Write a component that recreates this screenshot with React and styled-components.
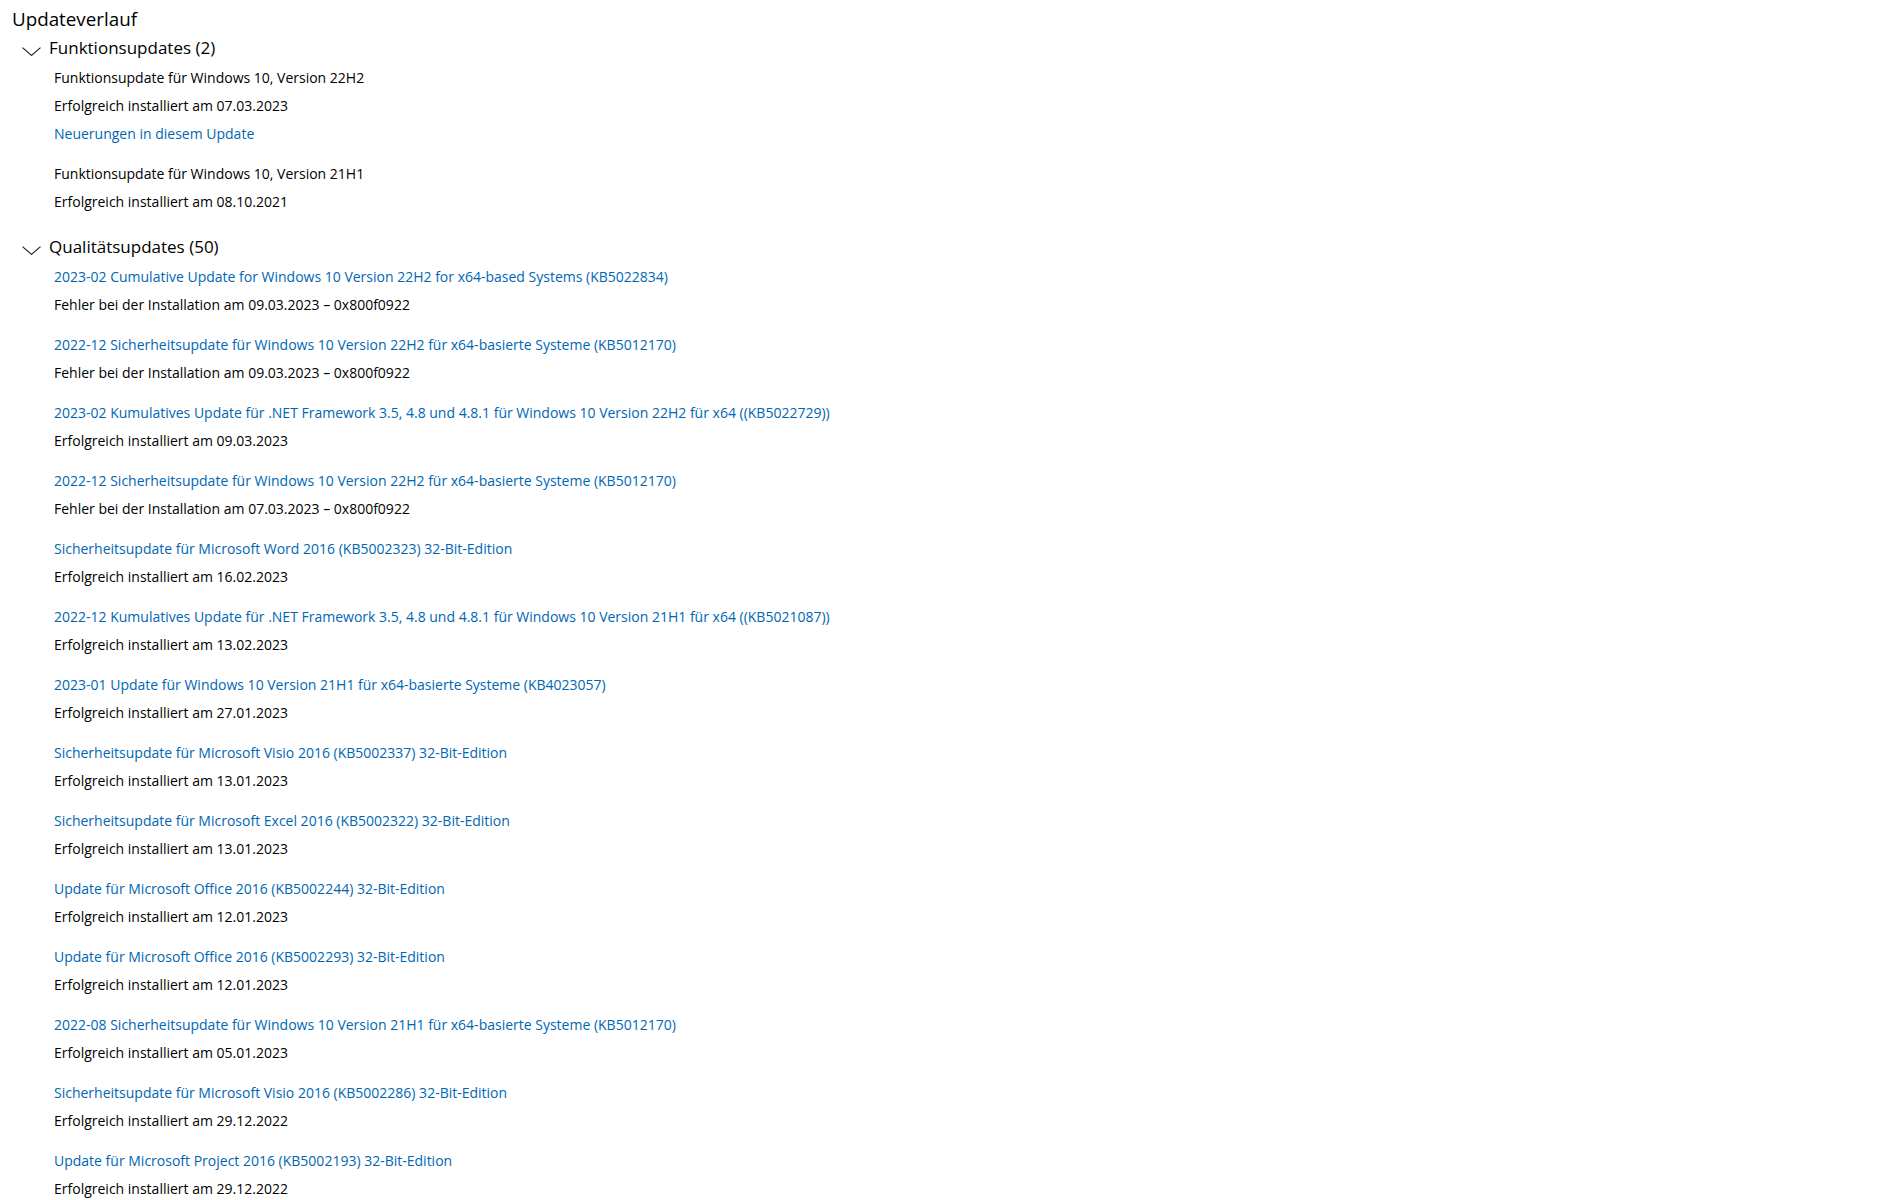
import { styled, createGlobalStyle } from 'styled-components'

const GlobalStyle = createGlobalStyle`
  html, body {
    margin: 0;
    padding: 0;
    background: #ffffff;
  }
  body {
    font-family: "Open Sans", "Noto Sans", "Liberation Sans", sans-serif;
    color: #000000;
  }
`;

const featureUpdates = [
  {
    name: 'Funktionsupdate für Windows 10, Version 22H2',
    status: 'Erfolgreich installiert am 07.03.2023',
    link: 'Neuerungen in diesem Update',
  },
  {
    name: 'Funktionsupdate für Windows 10, Version 21H1',
    status: 'Erfolgreich installiert am 08.10.2021',
  },
];

const failed = (date) => `Fehler bei der Installation am ${date} – 0x800f0922`
const ok = (date) => `Erfolgreich installiert am ${date}`

const qualityUpdates = [
  { name: '2023-02 Cumulative Update for Windows 10 Version 22H2 for x64-based Systems (KB5022834)', status: failed('09.03.2023') },
  { name: '2022-12 Sicherheitsupdate für Windows 10 Version 22H2 für x64-basierte Systeme (KB5012170)', status: failed('09.03.2023') },
  { name: '2023-02 Kumulatives Update für .NET Framework 3.5, 4.8 und 4.8.1 für Windows 10 Version 22H2 für x64 ((KB5022729))', status: ok('09.03.2023') },
  { name: '2022-12 Sicherheitsupdate für Windows 10 Version 22H2 für x64-basierte Systeme (KB5012170)', status: failed('07.03.2023') },
  { name: 'Sicherheitsupdate für Microsoft Word 2016 (KB5002323) 32-Bit-Edition', status: ok('16.02.2023') },
  { name: '2022-12 Kumulatives Update für .NET Framework 3.5, 4.8 und 4.8.1 für Windows 10 Version 21H1 für x64 ((KB5021087))', status: ok('13.02.2023') },
  { name: '2023-01 Update für Windows 10 Version 21H1 für x64-basierte Systeme (KB4023057)', status: ok('27.01.2023') },
  { name: 'Sicherheitsupdate für Microsoft Visio 2016 (KB5002337) 32-Bit-Edition', status: ok('13.01.2023') },
  { name: 'Sicherheitsupdate für Microsoft Excel 2016 (KB5002322) 32-Bit-Edition', status: ok('13.01.2023') },
  { name: 'Update für Microsoft Office 2016 (KB5002244) 32-Bit-Edition', status: ok('12.01.2023') },
  { name: 'Update für Microsoft Office 2016 (KB5002293) 32-Bit-Edition', status: ok('12.01.2023') },
  { name: '2022-08 Sicherheitsupdate für Windows 10 Version 21H1 für x64-basierte Systeme (KB5012170)', status: ok('05.01.2023') },
  { name: 'Sicherheitsupdate für Microsoft Visio 2016 (KB5002286) 32-Bit-Edition', status: ok('29.12.2022') },
  { name: 'Update für Microsoft Project 2016 (KB5002193) 32-Bit-Edition', status: ok('29.12.2022') },
];

function Chevron() {
  return (
    <ChevronSvg width="19" height="9" viewBox="0 0 19 9">
      <polyline points="0.5,0.6 9.5,8.4 18.5,0.6" fill="none" stroke="#1a1a1a" strokeWidth="1.1" />
    </ChevronSvg>
  )
}

function Group({ title, children }) {
  return (
    <Section>
      <GroupHeader>
        <Chevron />
        <GroupTitle>{title}</GroupTitle>
      </GroupHeader>
      <Items>{children}</Items>
    </Section>
  )
}

export default function App() {
  return (
    <Page>
      <GlobalStyle />
      <PageTitle>Updateverlauf</PageTitle>
      <Group title="Funktionsupdates (2)">
        {featureUpdates.map((u) => (
          <Item key={u.name}>
            <Line>{u.name}</Line>
            <Line>{u.status}</Line>
            {u.link && <Line $link>{u.link}</Line>}
          </Item>
        ))}
      </Group>
      <Group title="Qualitätsupdates (50)">
        {qualityUpdates.map((u, i) => (
          <Item key={i}>
            <Line $link>{u.name}</Line>
            <Line>{u.status}</Line>
          </Item>
        ))}
      </Group>
    </Page>
  )
}

const Page = styled.main`
  padding: 6px 0 0 12px;
  min-height: 1195px;
  box-sizing: border-box;
`;

const PageTitle = styled.h1`
  margin: 0;
  font-size: 18.8px;
  line-height: 27px;
  font-weight: 400;
  color: #000;
`;

const Section = styled.section`
  display: flex;
  flex-direction: column;
  & + & {
    margin-top: 4px;
  }
`;

const GroupHeader = styled.div`
  display: flex;
  align-items: flex-start;
  height: 30px;
  padding-left: 10px;
`;

const ChevronSvg = styled.svg`
  flex: none;
  margin-top: 14px;
  margin-right: 8px;
`;

const GroupTitle = styled.span`
  font-size: 17px;
  line-height: 30px;
  color: #000;
`;

const Items = styled.div`
  display: flex;
  flex-direction: column;
  padding: 1px 0 0 42px;
`;

const Item = styled.div`
  display: flex;
  flex-direction: column;
  margin-bottom: 12px;
`;

const Line = styled.span`
  font-size: 14px;
  line-height: 28px;
  white-space: nowrap;
  color: ${(p) => (p.$link ? '#0066b4' : '#000')};
  cursor: ${(p) => (p.$link ? 'pointer' : 'default')};
`;
